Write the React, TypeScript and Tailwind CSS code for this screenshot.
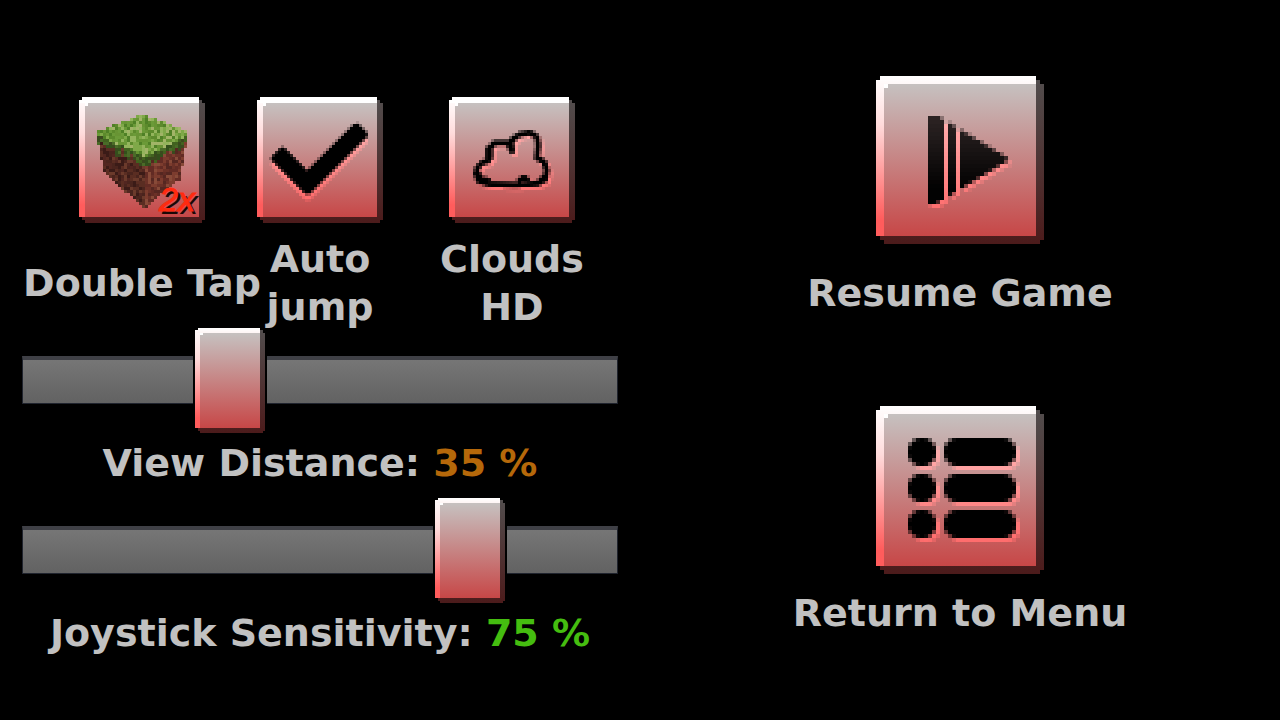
import { useId, useState, type ReactNode } from "react";

type Point = [number, number];
type Cell = { x: number; y: number; fill: string; opacity?: number };
type Shape = (x: number, y: number) => number;

const GRID = 42;

const clamp = (v: number) => Math.max(0, Math.min(1, v));

function segment(px: number, py: number, [ax, ay]: Point, [bx, by]: Point) {
  const dx = bx - ax;
  const dy = by - ay;
  const t = clamp(((px - ax) * dx + (py - ay) * dy) / (dx * dx + dy * dy || 1));
  return Math.hypot(px - ax - dx * t, py - ay - dy * t);
}

function stroke(points: Point[], radius: number): Shape {
  return (x, y) => {
    let best = Infinity;
    for (let i = 1; i < points.length; i++) {
      best = Math.min(best, segment(x, y, points[i - 1], points[i]));
    }
    return best - radius;
  };
}

function raster(shape: Shape, color: (y: number) => string, dx = 0, dy = 0): Cell[] {
  const cells: Cell[] = [];
  for (let y = 0; y < GRID; y++) {
    for (let x = 0; x < GRID; x++) {
      const opacity = clamp(0.5 - shape(x + 0.5 - dx, y + 0.5 - dy));
      if (opacity > 0.12) cells.push({ x, y, fill: color(y), opacity });
    }
  }
  return cells;
}

const shine = (y: number) => {
  const v = Math.round(205 - y * 2.9);
  return `rgb(255,${v},${v})`;
};
const black = () => "#000";

function engraved(shape: Shape, dx: number, dy: number, ink: (y: number) => string = black) {
  return [...raster(shape, shine, dx, dy), ...raster(shape, ink)];
}

// The tick is two bars at 45 degrees with nearly square, slightly rounded ends.
const tickBar = (a: Point, b: Point): Shape => (x, y) => {
  const length = Math.hypot(b[0] - a[0], b[1] - a[1]);
  const ux = (b[0] - a[0]) / length;
  const uy = (b[1] - a[1]) / length;
  const along = (x - a[0]) * ux + (y - a[1]) * uy;
  const across = Math.abs((x - a[0]) * uy - (y - a[1]) * ux);
  const ox = Math.max(-along, along - length, 0) - 1.4;
  const oy = across - 1.7;
  return Math.hypot(Math.max(ox, 0), Math.max(oy, 0)) + Math.min(Math.max(ox, oy), 0) - 1.4;
};
const tickLeft = tickBar([8.3, 20.3], [16.8, 28.8]);
const tickRight = tickBar([16.8, 28.8], [33.3, 12.4]);
const check = engraved((x, y) => Math.min(tickLeft(x, y), tickRight(x, y)), 0, 2);

const cloudLine: Point[] = [
  [9, 25.5], [9.5, 23.5], [11, 22], [13, 21.3], [13.2, 17.5], [15.3, 15.3], [19.5, 15.3],
  [20.8, 17.5], [20.8, 14.5], [23.5, 12.5], [27, 11.9], [29.3, 13.3], [29.8, 16], [29.3, 20.3],
  [31.7, 21.6], [32.6, 24.5], [32, 27.5], [29.5, 28.9], [22, 29.3], [13, 29], [10, 28], [9, 25.5],
];
const cloudMarks: Shape[] = [
  stroke(cloudLine, 0.95),
  stroke([[13.4, 17.5], [13.4, 20]], 1.3),
  stroke([[20.8, 16], [21, 18]], 1),
  stroke([[23.6, 28], [25, 26.8], [26.2, 28]], 1),
  stroke([[30.5, 28], [31.5, 27]], 1),
  stroke([[9.6, 25.5], [10.5, 27.3], [13, 28]], 1.1),
];
const cloud = engraved((x, y) => Math.min(...cloudMarks.map((m) => m(x, y))), 1, 1);

const playShape: Shape = (x, y) => {
  if ((x >= 17 && x < 18) || (x >= 20 && x < 21)) return 1;
  const upper = x < 16 ? 10 : 10.3 + (x - 16) * 0.6;
  const lower = x < 15 ? 32 : 32 - (x - 15) * 0.6;
  return Math.max(13 - x, x - 33, upper - y, y - lower);
};
const play = engraved(playShape, 0.6, 1, (y) => {
  const v = Math.max(2, 44 - (y - 10) * 2.4);
  return `rgb(${v},${v * 0.8},${v * 0.8})`;
});

const listShape: Shape = (x, y) => {
  const cy = y < 16.5 ? 11.5 : y < 25.5 ? 20.5 : 29.5;
  const dot = Math.hypot(x - 11.5, y - cy);
  const bar = segment(x, y, [20.5, cy], [31.5, cy]);
  return Math.min(dot, bar) - 3.6;
};
const list = engraved(listShape, 1, 1);

function noise(x: number, y: number) {
  const n = Math.sin(x * 127.1 + y * 311.7) * 43758.5453;
  return n - Math.floor(n);
}

const GRASS = ["#5c8a2c", "#6b9a38", "#7fa848", "#4f8026", "#93b45c", "#689434", "#a2b468"];
const MOSS = ["#33501c", "#41621f", "#4a6b28", "#3a4a1e"];
const DIRT_LEFT = ["#4a241d", "#5a2d22", "#3b1b17", "#6b3a2b", "#522620"];
const DIRT_RIGHT = ["#6b3127", "#7c3c2e", "#552721", "#874a38", "#622b24"];

function block(): Cell[] {
  const cells: Cell[] = [];
  for (let y = 6; y < 38; y++) {
    for (let x = 6; x < 36; x++) {
      const cx = x + 0.5;
      const cy = y + 0.5;
      const top = cx < 21 ? 11.5 - (cx - 6) * 0.38 : 5.8 + (cx - 21) * 0.36;
      const edge = cx < 22 ? 12.5 + (cx - 6) * 0.47 : 20 - (cx - 22) * 0.5;
      const bottom = cx < 22 ? 26 + (cx - 9) * 0.86 : 37 - (cx - 22) * 0.82;
      const inset = cx < 22 ? 6 + (cy - 14) * 0.22 : 36 - (cy - 14) * 0.16;
      if (cy < top || cy > bottom) continue;
      if (cx < 22 ? cx < inset : cx > inset) continue;
      const n = noise(x, y);
      const fringe = 1 + noise(x, 3) * 3;
      const palette =
        cy < edge ? GRASS : cy < edge + fringe ? MOSS : cx < 22 ? DIRT_LEFT : DIRT_RIGHT;
      cells.push({ x, y, fill: palette[Math.floor(n * palette.length)] });
    }
  }
  return cells;
}
const grassBlock = block();

function PixelIcon({ cells }: { cells: Cell[] }) {
  return (
    <svg viewBox="0 0 42 42" shapeRendering="crispEdges" aria-hidden="true" className="block size-full">
      {cells.map((c, i) => (
        <rect key={i} x={c.x} y={c.y} width="1" height="1" fill={c.fill} fillOpacity={c.opacity} />
      ))}
    </svg>
  );
}

const smallFace =
  "size-[126px] [background:linear-gradient(#fff,#fff)_6px_6px/3px_3px_no-repeat,linear-gradient(#c6c1c0,#c74747)_6px_6px/calc(100%_-_12px)_calc(100%_-_12px)_no-repeat,linear-gradient(#fff,#fff)_0_0/calc(100%_-_6px)_6px_no-repeat,linear-gradient(#fff,#ffdcdc_30%,#ff5c5c_90%)_0_0/6px_calc(100%_-_6px)_no-repeat,linear-gradient(#524e4e,#4c1b1b)] [clip-path:polygon(3px_0,calc(100%_-_6px)_0,calc(100%_-_6px)_3px,calc(100%_-_3px)_3px,calc(100%_-_3px)_6px,100%_6px,100%_calc(100%_-_3px),calc(100%_-_3px)_calc(100%_-_3px),calc(100%_-_3px)_100%,6px_100%,6px_calc(100%_-_3px),3px_calc(100%_-_3px),3px_calc(100%_-_6px),0_calc(100%_-_6px),0_3px,3px_3px)]";

const largeFace =
  "size-[168px] [background:linear-gradient(#fff,#fff)_8px_8px/4px_4px_no-repeat,linear-gradient(#c6c1c0,#c74747)_8px_8px/calc(100%_-_16px)_calc(100%_-_16px)_no-repeat,linear-gradient(#fff,#fff8f8)_0_0/calc(100%_-_8px)_8px_no-repeat,linear-gradient(#fff,#ffdcdc_30%,#ff5c5c_90%)_0_0/8px_calc(100%_-_8px)_no-repeat,linear-gradient(#524e4e,#4c1b1b)] [clip-path:polygon(4px_0,calc(100%_-_8px)_0,calc(100%_-_8px)_4px,calc(100%_-_4px)_4px,calc(100%_-_4px)_8px,100%_8px,100%_calc(100%_-_4px),calc(100%_-_4px)_calc(100%_-_4px),calc(100%_-_4px)_100%,8px_100%,8px_calc(100%_-_4px),4px_calc(100%_-_4px),4px_calc(100%_-_8px),0_calc(100%_-_8px),0_4px,4px_4px)]";

const thumbFace =
  "[&::-webkit-slider-thumb]:appearance-none [&::-webkit-slider-thumb]:h-[105px] [&::-webkit-slider-thumb]:w-[70px] [&::-webkit-slider-thumb]:[background:linear-gradient(#fff,#fff)_5px_5px/3px_2px_no-repeat,linear-gradient(#c6c1c0,#c74747)_5px_5px/calc(100%_-_10px)_calc(100%_-_10px)_no-repeat,linear-gradient(#fff,#fff5f5)_0_0/calc(100%_-_5px)_5px_no-repeat,linear-gradient(#fff,#ffdcdc_30%,#ff5c5c_90%)_0_0/5px_calc(100%_-_5px)_no-repeat,linear-gradient(#524e4e,#4c1b1b)] [&::-webkit-slider-thumb]:[clip-path:polygon(3px_0,calc(100%_-_5px)_0,calc(100%_-_5px)_2px,calc(100%_-_2px)_2px,calc(100%_-_2px)_5px,100%_5px,100%_calc(100%_-_2px),calc(100%_-_2px)_calc(100%_-_2px),calc(100%_-_2px)_100%,5px_100%,5px_calc(100%_-_2px),3px_calc(100%_-_2px),3px_calc(100%_-_5px),0_calc(100%_-_5px),0_2px,3px_2px)]";

function Toggle({
  label,
  cells,
  badge,
  className = "",
}: {
  label: ReactNode;
  cells: Cell[];
  badge?: string;
  className?: string;
}) {
  const id = useId();
  const [on, setOn] = useState(true);
  return (
    <div className={`flex flex-col items-center ${className}`}>
      <button
        id={id}
        type="button"
        aria-pressed={on}
        onClick={() => setOn(!on)}
        className={`relative shrink-0 cursor-pointer ${smallFace}`}
      >
        <PixelIcon cells={cells} />
        {badge && (
          <span className="absolute right-2.5 bottom-1.5 font-['Liberation_Sans',sans-serif] text-[34px] leading-9 font-normal text-[#ff2a10] italic [-webkit-text-stroke:1px_#ff2a10] [text-shadow:3px_3px_0_#1a0806]">
            {badge}
          </span>
        )}
      </button>
      <label htmlFor={id} className="mt-3 flex h-24 items-center text-center whitespace-nowrap">
        <span>{label}</span>
      </label>
    </div>
  );
}

function Setting({ label, initial, valueClass }: { label: string; initial: number; valueClass: string }) {
  const id = useId();
  const [value, setValue] = useState(initial);
  return (
    <div className="px-5 pb-[11px]">
      <div className="relative h-[105px] pt-7">
        <div className="mx-0.5 h-12 border border-t-4 border-[#20242e] border-t-[#3f4046] bg-linear-to-b from-[#767676] to-[#626262]" />
        <div
          className="absolute top-7 h-12 w-[74px] -translate-x-1/2 bg-black"
          style={{ left: `${value}%` }}
        />
        <input
          id={id}
          type="range"
          min={0}
          max={100}
          value={value}
          onChange={(e) => setValue(Number(e.target.value))}
          className={`absolute top-0 -left-[35px] h-[105px] w-[calc(100%+70px)] cursor-pointer appearance-none bg-transparent ${thumbFace}`}
        />
      </div>
      <div className="mt-1.5 text-center whitespace-nowrap">
        <label htmlFor={id}>{label}</label>{" "}
        <output htmlFor={id} className={valueClass}>
          {value} %
        </output>
      </div>
    </div>
  );
}

function MenuAction({ label, cells, gap }: { label: string; cells: Cell[]; gap: string }) {
  const id = useId();
  return (
    <div className="flex flex-col items-center">
      <button id={id} type="button" className={`shrink-0 cursor-pointer ${largeFace}`}>
        <PixelIcon cells={cells} />
      </button>
      <label htmlFor={id} className={`whitespace-nowrap ${gap}`}>
        {label}
      </label>
    </div>
  );
}

export default function App() {
  return (
    <main className="grid min-h-screen grid-cols-2 bg-black font-['DejaVu_Sans',sans-serif] text-[38px] leading-[48px] font-bold text-[#c1c1c1]">
      <section aria-label="Options" className="pt-[97px]">
        <div className="grid grid-cols-[minmax(0,244fr)_minmax(0,112fr)_minmax(0,264fr)] pl-5">
          <Toggle label="Double Tap" cells={grassBlock} badge="2x" />
          <Toggle label={<>Auto<br />jump</>} cells={check} />
          <Toggle label={<>Clouds<br />HD</>} cells={cloud} className="pl-2" />
        </div>
        <div className="relative -mt-[3px]">
          <Setting label="View Distance:" initial={35} valueClass="text-[#b5680a]" />
          <Setting label="Joystick Sensitivity:" initial={75} valueClass="text-[#45bd10]" />
        </div>
      </section>
      <section aria-label="Game" className="flex flex-col gap-[89px] pt-[76px]">
        <MenuAction label="Resume Game" cells={play} gap="mt-[25px]" />
        <MenuAction label="Return to Menu" cells={list} gap="mt-[15px]" />
      </section>
    </main>
  );
}
